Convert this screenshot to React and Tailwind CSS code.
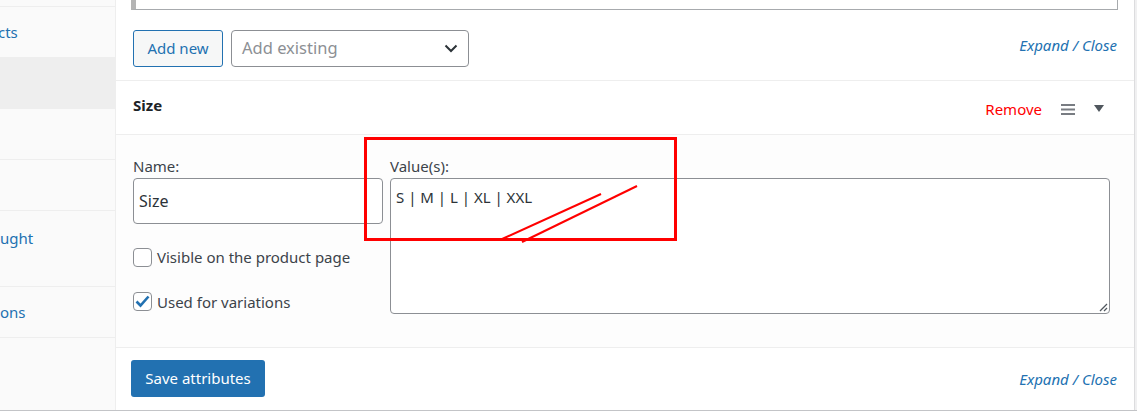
import React from "react";

const font = { fontFamily: '"Noto Sans", "Open Sans", sans-serif' };

function SideRow({ h, active, children, textClass = "" }) {
  return (
    <div
      className={`border-b border-[#eeeeee] flex items-center overflow-hidden whitespace-nowrap ${active ? "bg-[#eeeeee]" : ""}`}
      style={{ height: h }}
    >
      <span className={`text-[15px] text-[#2271b1] ${textClass}`}>{children}</span>
    </div>
  );
}

export default function App() {
  return (
    <div className="relative w-[1137px] h-[412px] bg-white overflow-hidden" style={font}>
      <div className="flex h-[411px] border-b border-[#c3c4c7]">
        {/* sidebar */}
        <div className="w-[116px] shrink-0 bg-[#fafafa] border-r border-[#eeeeee] flex flex-col">
          <SideRow h={7} />
          <SideRow h={51} textClass="-ml-[2px] mt-[1px]">cts</SideRow>
          <SideRow h={51} active />
          <SideRow h={51} />
          <SideRow h={51} />
          <SideRow h={76} textClass="-mt-[21px]">ught</SideRow>
          <SideRow h={51} textClass="mt-[1px]">ons</SideRow>
          <div className="flex-1" />
        </div>

        {/* main */}
        <div className="w-[1019px] shrink-0 border-r border-[#dcdcde] flex flex-col">
          {/* top area */}
          <div className="h-[81px] border-b border-[#eeeeee] flex flex-col">
            <div className="flex pl-[15px] pr-[16px]">
              <div className="flex-1 h-[10px] border-l-[5px] border-l-[#b4b4b4] border-b border-r border-[#a7aaad] bg-white" />
            </div>
            <div className="flex items-center pl-[17px] pr-[17px] mt-[20px]">
              <button className="h-[37px] w-[90px] rounded-[3px] border border-[#2271b1] bg-[#f6f7f7] text-[#2271b1] text-[15px] flex items-center justify-center">
                Add new
              </button>
              <div className="ml-[8px] h-[37px] w-[238px] rounded-[4px] border border-[#8c8f94] bg-white flex items-center pl-[10px] pr-[10px] justify-between">
                <span className="text-[16.5px] text-[#8c8f94]">Add existing</span>
                <svg width="14" height="9" viewBox="0 0 14 9">
                  <path d="M1.5 1.5 L7 7 L12.5 1.5" fill="none" stroke="#2c3338" strokeWidth="2" />
                </svg>
              </div>
              <div className="flex-1" />
              <span className="italic text-[15px] text-[#2271b1] mt-[-6px]">Expand / Close</span>
            </div>
          </div>

          {/* header */}
          <div className="h-[54px] border-b border-[#eeeeee] flex items-center pl-[17px] pr-[30px]">
            <span className="font-bold text-[15px] text-[#1d2327] -mt-[4px]">Size</span>
            <div className="flex-1" />
            <span className="text-[15px] text-[#ff0000] mt-[4px]">Remove</span>
            <svg className="ml-[19px] mt-[4px]" width="14" height="11" viewBox="0 0 14 11">
              <rect x="0" y="0" width="14" height="2" fill="#787c82" />
              <rect x="0" y="4.5" width="14" height="2" fill="#787c82" />
              <rect x="0" y="9" width="14" height="2" fill="#787c82" />
            </svg>
            <svg className="ml-[19px] mt-[2px]" width="10" height="7" viewBox="0 0 10 7">
              <path d="M0 0 L10 0 L5 7 Z" fill="#50575e" />
            </svg>
          </div>

          {/* body */}
          <div className="h-[213px] border-b border-[#eeeeee] bg-[#fdfdfd] flex pl-[17px] pt-[21px]">
            <div className="w-[250px] flex flex-col">
              <label className="text-[15px] text-[#3c434a] leading-[20px]">Name:</label>
              <div className="mt-[2px] h-[46px] rounded-[4px] border border-[#8c8f94] bg-white flex items-center pl-[5px]">
                <span className="text-[16px] text-[#2c3338]">Size</span>
              </div>
              <div className="mt-[22px] flex items-center">
                <span className="w-[19px] h-[19px] rounded-[4px] border border-[#8c8f94] bg-white" />
                <span className="ml-[5px] text-[15px] text-[#3c434a]">Visible on the product page</span>
              </div>
              <div className="mt-[22px] flex items-center">
                <span className="w-[19px] h-[19px] rounded-[4px] border border-[#8c8f94] bg-white flex items-center justify-center">
                  <svg width="15" height="13" viewBox="0 0 15 13">
                    <path d="M1.5 6.5 L5.5 10.5 L13.5 1.5" fill="none" stroke="#2271b1" strokeWidth="2.6" />
                  </svg>
                </span>
                <span className="ml-[5px] text-[15px] text-[#3c434a]">Used for variations</span>
              </div>
            </div>
            <div className="ml-[7px] w-[720px] flex flex-col">
              <label className="text-[15px] text-[#3c434a] leading-[20px]">Value(s):</label>
              <div className="relative mt-[2px] h-[136px] rounded-[4px] border border-[#8c8f94] bg-white pl-[5px] pt-[6px]">
                <span className="text-[15px] text-[#2c3338]">S | M | L | XL | XXL</span>
                <svg className="absolute right-[1px] bottom-[1px]" width="10" height="10" viewBox="0 0 10 10">
                  <path d="M9 2 L2 9 M9 6 L6 9" stroke="#50575e" strokeWidth="1.3" />
                </svg>
              </div>
            </div>
          </div>

          {/* footer */}
          <div className="flex-1 flex items-center pl-[15px] pr-[17px]">
            <button className="h-[37px] w-[134px] rounded-[3px] bg-[#2271b1] text-white text-[15px] flex items-center justify-center -mt-[2px]">
              Save attributes
            </button>
            <div className="flex-1" />
            <span className="italic text-[15px] text-[#2271b1]">Expand / Close</span>
          </div>
        </div>
        <div className="flex-1 bg-[#f0f0f1]" />
      </div>

      {/* red annotation overlay */}
      <svg className="absolute left-0 top-0 pointer-events-none" width="1137" height="412">
        <rect x="365.5" y="138.5" width="310" height="101" fill="none" stroke="#ff0000" strokeWidth="3" />
        <path d="M500 240 L601 194" stroke="#ff0000" strokeWidth="2" />
        <path d="M522 242 L637 186" stroke="#ff0000" strokeWidth="2" />
      </svg>
    </div>
  );
}
